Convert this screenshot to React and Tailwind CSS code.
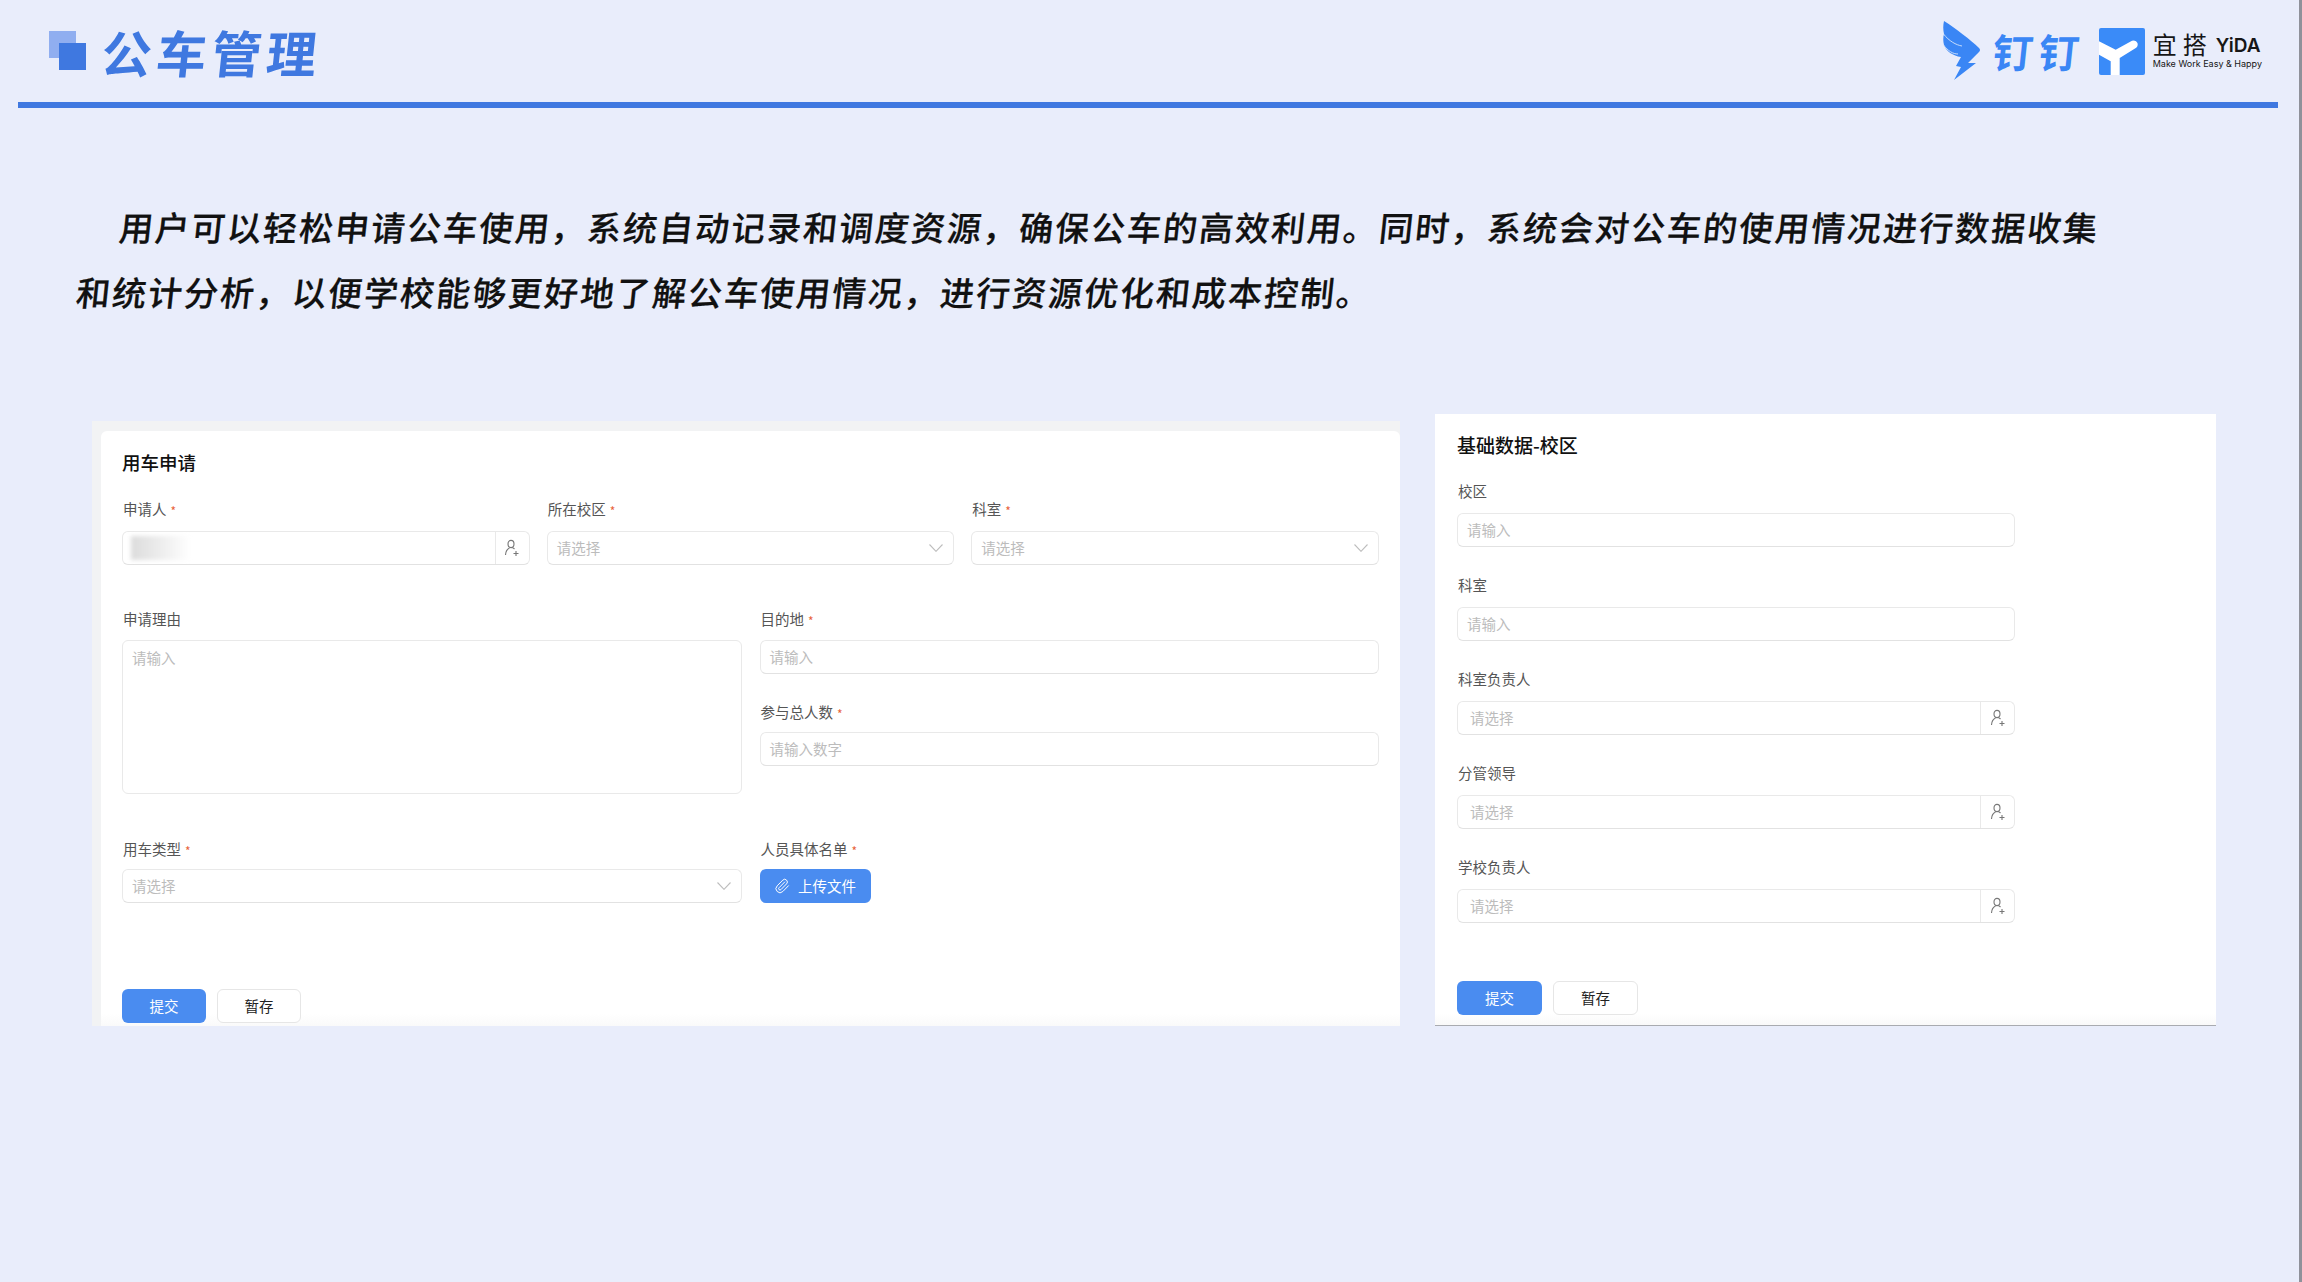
import { Paperclip } from "lucide-react"

const cjk = { fontFamily: '"Noto Sans CJK SC", "Noto Sans", sans-serif' }

const UserPlus = () => (
  <svg width="18" height="18" viewBox="0 0 18 18" fill="none" stroke="#777" strokeWidth="1.1">
    <ellipse cx="8" cy="5" rx="3" ry="3.6" />
    <path d="M2.5 16c.2-3.8 2-6 4-7M9.5 8.8c.8.3 1.5.7 2 1.2" />
    <path d="M13 12v5M10.5 14.5h5" />
  </svg>
)

const Chevron = () => (
  <svg width="14" height="8" viewBox="0 0 14 8" fill="none" stroke="#bdbdbd" strokeWidth="1.1">
    <path d="M.5.5 7 7.3 13.5.5" />
  </svg>
)

const Label = ({ text, required }) => (
  <div className="h-5 pl-px flex items-center gap-1 text-[14.5px] leading-5 text-[#555]">
    {text}
    {required && <span className="text-[#e8623a] text-xs leading-none translate-y-[2px]">*</span>}
  </div>
)

const Box = ({ children, className = "h-[34px]" }) => (
  <div className={`flex items-center bg-white rounded-md border border-[#e9e9e9] border-b-[#e2e2e2] ${className}`}>
    {children}
  </div>
)

const InputBox = ({ placeholder = "请输入" }) => (
  <Box>
    <span className="pl-[9px] text-[14.5px] text-[#bcbcbc]">{placeholder}</span>
  </Box>
)

const SelectBox = () => (
  <Box>
    <span className="flex-1 pl-[9px] text-[14.5px] text-[#bcbcbc]">请选择</span>
    <span className="pr-[10px] flex"><Chevron /></span>
  </Box>
)

const UserBox = ({ placeholder, addonWidth = "w-[34px]", blurred }) => (
  <Box>
    <div className="flex-1 pl-3 flex items-center text-[14.5px] text-[#bcbcbc]">
      {blurred && <div className="ml-[-4px] w-[60px] h-6 blur-[2px] bg-linear-to-r from-[#dcdcdc] to-white" />}
      {placeholder}
    </div>
    <div className={`h-full border-l border-[#e9e9e9] flex items-center justify-center ${addonWidth}`}>
      <UserPlus />
    </div>
  </Box>
)

const Buttons = ({ width }) => (
  <div className="relative z-10 flex gap-[11px] text-[14.5px]">
    <button className={`h-[34px] rounded-md bg-[#4a8cf0] text-white ${width}`}>提交</button>
    <button className={`h-[34px] rounded-md bg-white border border-[#e6e6e6] text-[#222] ${width}`}>暂存</button>
  </div>
)

const Fade = () => (
  <div className="absolute inset-x-0 bottom-0 h-3 bg-linear-to-b from-white/0 to-[#f6f6f6]/60 pointer-events-none" />
)

const ApplyForm = () => (
  <div className="w-[1308px] h-[605px] bg-[#f2f3f4] pl-[9px] pt-[10px]">
    <div className="relative h-full bg-white rounded-t-md px-[21px] pt-[19px]">
      <div className="h-6 text-[18.5px] leading-6 font-medium text-[#111]">用车申请</div>

      <div className="mt-[25px] grid grid-cols-3 gap-x-[17px]">
        <div>
          <Label text="申请人" required />
          <div className="mt-3"><UserBox blurred /></div>
        </div>
        <div>
          <Label text="所在校区" required />
          <div className="mt-3"><SelectBox /></div>
        </div>
        <div>
          <Label text="科室" required />
          <div className="mt-3"><SelectBox /></div>
        </div>
      </div>

      <div className="mt-[44px] grid grid-cols-2 gap-x-[18px]">
        <div>
          <Label text="申请理由" />
          <div className="mt-[11px]">
            <div className="h-[154px] bg-white rounded-md border border-[#e9e9e9] px-[9px] py-[6px] text-[14.5px] text-[#bcbcbc]">请输入</div>
          </div>
        </div>
        <div>
          <Label text="目的地" required />
          <div className="mt-[11px]"><InputBox /></div>
          <div className="mt-[28px]"><Label text="参与总人数" required /></div>
          <div className="mt-[10px]"><InputBox placeholder="请输入数字" /></div>
        </div>
      </div>

      <div className="mt-[45px] grid grid-cols-2 gap-x-[18px]">
        <div>
          <Label text="用车类型" required />
          <div className="mt-[10px]"><SelectBox /></div>
        </div>
        <div>
          <Label text="人员具体名单" required />
          <button className="mt-[10px] w-[111px] h-[34px] rounded-md bg-[#4a8cf0] text-white text-[14.5px] flex items-center justify-center gap-[8px]">
            <Paperclip size={16} strokeWidth={1.5} />
            上传文件
          </button>
        </div>
      </div>

      <div className="mt-[86px]"><Buttons width="w-[84px]" /></div>
      <Fade />
    </div>
  </div>
)

const campusFields = [
  { label: "校区" },
  { label: "科室" },
  { label: "科室负责人", user: true },
  { label: "分管领导", user: true },
  { label: "学校负责人", user: true },
]

const CampusForm = () => (
  <div className="relative w-[781px] h-[612px] bg-white border-b border-[#a9abb0] pl-[22px] pt-[19px]">
    <div className="h-[24px] text-[19px] leading-6 font-medium text-[#111]">基础数据-校区</div>
    <div className="mt-[24px] w-[558px] flex flex-col gap-[28px]">
      {campusFields.map((f) => (
        <div key={f.label}>
          <Label text={f.label} />
          <div className="mt-[12px]">
            {f.user ? <UserBox placeholder="请选择" /> : <InputBox />}
          </div>
        </div>
      ))}
    </div>
    <div className="mt-[58px]"><Buttons width="w-[85px]" /></div>
    <Fade />
  </div>
)

const DingLogo = () => (
  <div className="flex items-center">
    <svg width="38" height="60" viewBox="0 0 38 60">
      <path d="M1 0C12 7 28 19 36 27Q38 29 36 31L25 42L33 42L11 59L18 46L13 45L18 36C10 35 3 30 1 24C0 20 0 16 1 13C0 9 0 4 1 0Z" fill="#3a86f5" />
      <path d="M.5 13C6 20 13 24 19 25M.5 24C5 30 10 33 15 33" fill="none" stroke="#d5e4fb" strokeWidth="0.9" />
    </svg>
    <span className="ml-[12px] inline-block text-[40px] leading-none font-bold -skew-x-6 tracking-[6px] text-[#3a86f5]">钉钉</span>
  </div>
)

const YidaLogo = () => (
  <div className="flex items-center">
    <svg width="46" height="47" viewBox="0 0 46 47">
      <rect width="46" height="47" rx="2" fill="#3a8bf8" />
      <path d="M0 13.3L16.7 21.7L33 12.7Q37 11.5 38.5 15Q39.5 18.5 36 20.5L20.7 30V47H11.7V33.3L0 26.7Z" fill="#fff" />
    </svg>
    <div className="ml-[8px] text-[#161616]">
      <div className="flex items-end h-[24px]">
        <span className="text-[24px] leading-6 tracking-[6px]">宜搭</span>
        <span className="ml-[3px] text-[19px] leading-5 font-semibold" style={{ fontFamily: '"Inter", sans-serif' }}>YiDA</span>
      </div>
      <div className="mt-[2px] text-[9px] leading-3 whitespace-nowrap" style={{ fontFamily: '"Inter", sans-serif' }}>Make Work Easy &amp; Happy</div>
    </div>
  </div>
)

export default function App() {
  return (
    <div className="w-full h-[1282px] flex bg-[#e9edfb] overflow-hidden" style={cjk}>
      <div className="flex-1">
        {/* Header */}
        <div className="h-[102px] pl-[49px] pr-[37px] flex items-center justify-between">
          <div className="flex items-center">
            <div className="relative w-[37px] h-[39px] -mt-[1px]">
              <div className="absolute left-0 top-0 w-[27px] h-[27px] bg-[#90aef0]" />
              <div className="absolute left-[10px] top-[12px] w-[27px] h-[27px] bg-[#3f78e0]" />
            </div>
            <div className="ml-[16px] text-[50px] leading-none font-bold -skew-x-6 tracking-[5px] text-[#3f78e0]">公车管理</div>
          </div>
          <div className="flex items-center gap-[14px]">
            <DingLogo />
            <YidaLogo />
          </div>
        </div>
        <div className="ml-[18px] w-[2260px] h-[6px] bg-[#3f78e0]" />

        {/* Intro */}
        <p className="mt-[86px] ml-[80px] w-[2040px] text-[34px] leading-[65px] font-medium -skew-x-6 tracking-[2px] text-[#111] indent-[36px] [-webkit-text-stroke:0.2px_#111]">
          用户可以轻松申请公车使用，系统自动记录和调度资源，确保公车的高效利用。同时，系统会对公车的使用情况进行数据收集和统计分析，以便学校能够更好地了解公车使用情况，进行资源优化和成本控制。
        </p>

        {/* Forms */}
        <div className="mt-[90px] ml-[92px] flex items-end gap-[35px]">
          <ApplyForm />
          <CampusForm />
        </div>
      </div>
      <div className="w-[3px] bg-[#8f919a]" />
    </div>
  )
}
